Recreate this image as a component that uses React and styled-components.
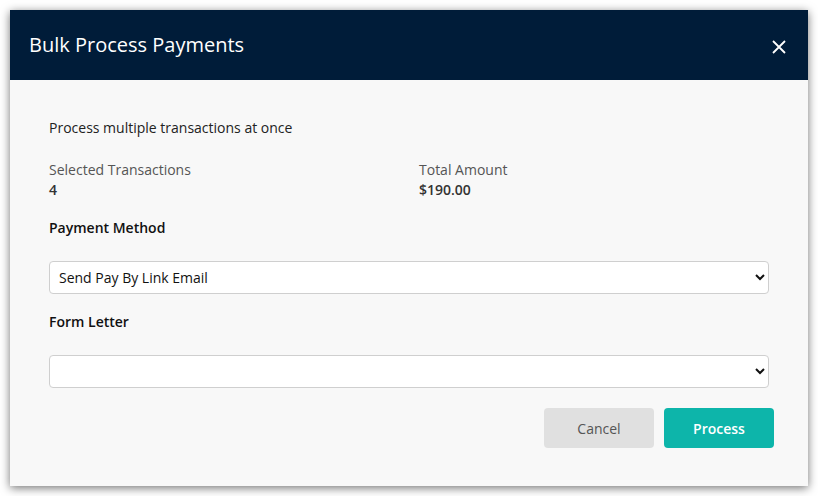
import React from "react";
import styled, { createGlobalStyle } from "styled-components";

const Global = createGlobalStyle`
  html, body { margin: 0; padding: 0; background: #ffffff; }
  body { font-family: "Open Sans", "Noto Sans", sans-serif; }
  * { box-sizing: border-box; }
`;

const Page = styled.div`
  padding: 10px 10px 0 10px;
  width: 818px;
  height: 496px;
`;

const Modal = styled.div`
  width: 798px;
  background: #f8f8f8;
  box-shadow: 0 2px 9px rgba(0, 0, 0, 0.55);
`;

const Header = styled.div`
  height: 70px;
  background: #001c39;
  display: flex;
  align-items: center;
  justify-content: space-between;
  padding: 0 21px 0 19px;
`;

const Title = styled.h2`
  margin: 0;
  color: #ffffff;
  font-size: 20px;
  font-weight: 400;
  line-height: 28px;
`;

const CloseButton = styled.button`
  background: none;
  border: none;
  padding: 0;
  width: 16px;
  height: 16px;
  margin-top: 3px;
  display: flex;
  align-items: center;
  justify-content: center;
  cursor: pointer;
`;

const Body = styled.div`
  padding: 38px 39px 38px 39px;
  display: flex;
  flex-direction: column;
`;

const Description = styled.p`
  margin: 0;
  font-size: 14px;
  line-height: 20px;
  color: #222;
`;

const Stats = styled.div`
  display: grid;
  grid-template-columns: 1fr 1fr;
  column-gap: 20px;
  margin-top: 22px;
`;

const Stat = styled.div`
  display: flex;
  flex-direction: column;
`;

const StatLabel = styled.span`
  font-size: 14px;
  line-height: 20px;
  color: #555;
`;

const StatValue = styled.span`
  font-size: 14px;
  line-height: 20px;
  font-weight: 600;
  color: #333;
`;

const FieldLabel = styled.label`
  display: block;
  margin-top: ${(p) => p.$top}px;
  font-size: 14px;
  line-height: 20px;
  font-weight: 600;
  color: #111;
`;

const Select = styled.select`
  display: block;
  width: 100%;
  height: 33px;
  margin-top: 23px;
  padding: 0 5px;
  background-color: #ffffff;
  border: 1px solid #cfcfcf;
  border-radius: 4px;
  font-family: "Open Sans", "Noto Sans", sans-serif;
  font-size: 14px;
  color: #111;
`;

const Actions = styled.div`
  display: flex;
  justify-content: flex-end;
  gap: 10px;
  margin-top: 20px;
  margin-right: -5px;
`;

const Button = styled.button`
  width: 110px;
  height: 40px;
  border: none;
  border-radius: 4px;
  font-family: "Open Sans", "Noto Sans", sans-serif;
  font-size: 14px;
  font-weight: ${(p) => (p.$primary ? 600 : 400)};
  color: ${(p) => (p.$primary ? "#ffffff" : "#555555")};
  background: ${(p) => (p.$primary ? "#0db5aa" : "#e0e0e0")};
  cursor: pointer;
`;

export default function App() {
  return (
    <>
      <Global />
      <Page>
        <Modal>
          <Header>
            <Title>Bulk Process Payments</Title>
            <CloseButton aria-label="Close">
              <svg width="14" height="14" viewBox="0 0 14 14">
                <path d="M1 1 L13 13 M13 1 L1 13" stroke="#ffffff" strokeWidth="1.8" />
              </svg>
            </CloseButton>
          </Header>
          <Body>
            <Description>Process multiple transactions at once</Description>
            <Stats>
              <Stat>
                <StatLabel>Selected Transactions</StatLabel>
                <StatValue>4</StatValue>
              </Stat>
              <Stat>
                <StatLabel>Total Amount</StatLabel>
                <StatValue>$190.00</StatValue>
              </Stat>
            </Stats>
            <FieldLabel $top={18}>Payment Method</FieldLabel>
            <Select defaultValue="link">
              <option value="link">Send Pay By Link Email</option>
            </Select>
            <FieldLabel $top={18}>Form Letter</FieldLabel>
            <Select defaultValue="">
              <option value=""></option>
            </Select>
            <Actions>
              <Button>Cancel</Button>
              <Button $primary>Process</Button>
            </Actions>
          </Body>
        </Modal>
      </Page>
    </>
  );
}
